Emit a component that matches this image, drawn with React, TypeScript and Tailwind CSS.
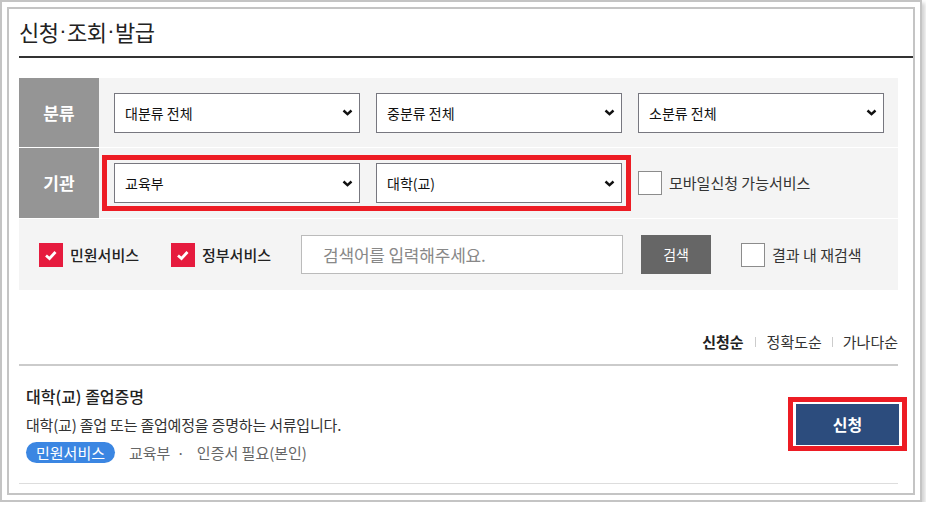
import React from 'react'

const font = { fontFamily: '"Noto Sans CJK KR", "Noto Sans", sans-serif' }

const Chevron = () => (
  <svg width="11" height="7" viewBox="0 0 11 7" className="shrink-0">
    <polyline points="1.5,1.5 5.5,5.2 9.5,1.5" fill="none" stroke="#111" strokeWidth="2.4" />
  </svg>
)

const FakeSelect: React.FC<{ label: string }> = ({ label }) => (
  <div className="w-[246px] h-[40px] bg-white border border-[#77777f] flex items-center justify-between pl-[10px] pr-[6px] text-[14px] text-[#111]">
    <span className="leading-[20px]">{label}</span>
    <Chevron />
  </div>
)

const RedCheck: React.FC<{ label: string }> = ({ label }) => (
  <div className="flex items-center">
    <div className="w-[24px] h-[24px] bg-[#e61b3e] flex items-center justify-center">
      <svg width="24" height="24" viewBox="0 0 24 24">
        <polyline points="7,12.5 10.5,15.5 16.5,9" fill="none" stroke="#fff" strokeWidth="2.8" />
      </svg>
    </div>
    <span className="ml-[7px] text-[15px] font-medium text-[#222] leading-[20px]">{label}</span>
  </div>
)

const EmptyCheck: React.FC<{ label: string }> = ({ label }) => (
  <div className="flex items-center">
    <div className="w-[24px] h-[24px] bg-white border-[1.5px] border-[#8c8c8c]" />
    <span className="ml-[7px] text-[15px] text-[#333] leading-[20px]">{label}</span>
  </div>
)

const Dot = () => (
  <span style={{ fontFamily: '"Liberation Sans", sans-serif' }} className="mx-[1px] leading-[30px]">·</span>
)

export default function App() {
  return (
    <div style={font} className="w-[922px] h-[502px] bg-white border-2 border-[#c4c4c4] p-[5px] shadow-[3px_3px_4px_rgba(0,0,0,0.18)]">
      <div className="w-full h-full border-2 border-[#c4c4c4] pl-[10px] flex flex-col">
        {/* 제목 */}
        <div className="pt-[7px] pb-[10px] border-b-2 border-[#333]">
          <h1 className="h-[30px] flex items-center text-[22px] leading-[30px] text-[#222] tracking-[-0.6px] overflow-hidden">
            <span>신청</span><Dot /><span>조회</span><Dot /><span>발급</span>
          </h1>
        </div>

        <div className="pr-[15px]">
          {/* 검색 필터 */}
          <div className="mt-[20px] bg-[#f4f4f4]">
            <div className="flex h-[70px] border-b border-white">
              <div className="w-[80px] bg-[#959595] flex items-center justify-center text-white text-[17px] font-bold">분류</div>
              <div className="flex items-center gap-[16px] pl-[15px]">
                <FakeSelect label="대분류 전체" />
                <FakeSelect label="중분류 전체" />
                <FakeSelect label="소분류 전체" />
              </div>
            </div>
            <div className="flex h-[71px] border-b border-white">
              <div className="w-[80px] bg-[#959595] flex items-center justify-center text-white text-[17px] font-bold">기관</div>
              <div className="relative flex items-center gap-[16px] pl-[15px]">
                <FakeSelect label="교육부" />
                <FakeSelect label="대학(교)" />
                <EmptyCheck label="모바일신청 가능서비스" />
                <div className="absolute left-[3px] top-[7px] w-[529px] h-[56px] border-[5px] border-[#ed1c24]" />
              </div>
            </div>
            <div className="flex items-center h-[71px] pl-[20px]">
              <RedCheck label="민원서비스" />
              <div className="ml-[32px]">
                <RedCheck label="정부서비스" />
              </div>
              <div className="ml-[30px] w-[322px] h-[39px] bg-white border border-[#bbb] flex items-center pl-[21px] text-[17px] text-[#888] tracking-[-0.2px]">
                검색어를 입력해주세요.
              </div>
              <div className="ml-[18px] w-[70px] h-[39px] bg-[#666] flex items-center justify-center text-white text-[14px]">검색</div>
              <div className="ml-[30px]">
                <EmptyCheck label="결과 내 재검색" />
              </div>
            </div>
          </div>

          {/* 정렬 */}
          <div className="mt-[42px] h-[20px] flex justify-end items-center text-[15px] leading-[20px]">
            <span className="font-bold text-[#222]">신청순</span>
            <span className="mx-[11px] w-px h-[10px] bg-[#ccc]" />
            <span className="text-[#333]">정확도순</span>
            <span className="mx-[10px] w-px h-[10px] bg-[#ccc]" />
            <span className="text-[#333]">가나다순</span>
          </div>

          {/* 목록 */}
          <div className="mt-[12px] border-t-2 border-[#cbcbcb]">
            <div className="flex items-center justify-between pl-[7px] pt-[19px] pb-[20px] border-b border-[#ddd]">
              <div>
                <div className="text-[16px] leading-[22px] font-medium text-[#222]">대학(교) 졸업증명</div>
                <div className="mt-[8px] text-[15px] leading-[20px] text-[#333] tracking-[-0.2px]">대학(교) 졸업 또는 졸업예정을 증명하는 서류입니다.</div>
                <div className="mt-[7px] h-[21px] flex items-center text-[15px] leading-[21px] text-[#666]">
                  <span className="h-[21px] px-[10px] rounded-full bg-[#3b86e2] text-white leading-[21px]">민원서비스</span>
                  <span className="ml-[14px]">교육부</span>
                  <span className="ml-[6px] mr-[12px]">·</span>
                  <span>인증서 필요(본인)</span>
                </div>
              </div>
              <div className="relative mr-[-1px]">
                <div className="w-[103px] h-[41px] bg-[#2c4c7d] flex items-center justify-center text-white text-[16px] font-bold">신청</div>
                <div className="absolute left-[-8px] top-[-7px] w-[119px] h-[54px] border-[5px] border-[#ed1c24]" />
              </div>
            </div>
          </div>
        </div>
      </div>
    </div>
  )
}
